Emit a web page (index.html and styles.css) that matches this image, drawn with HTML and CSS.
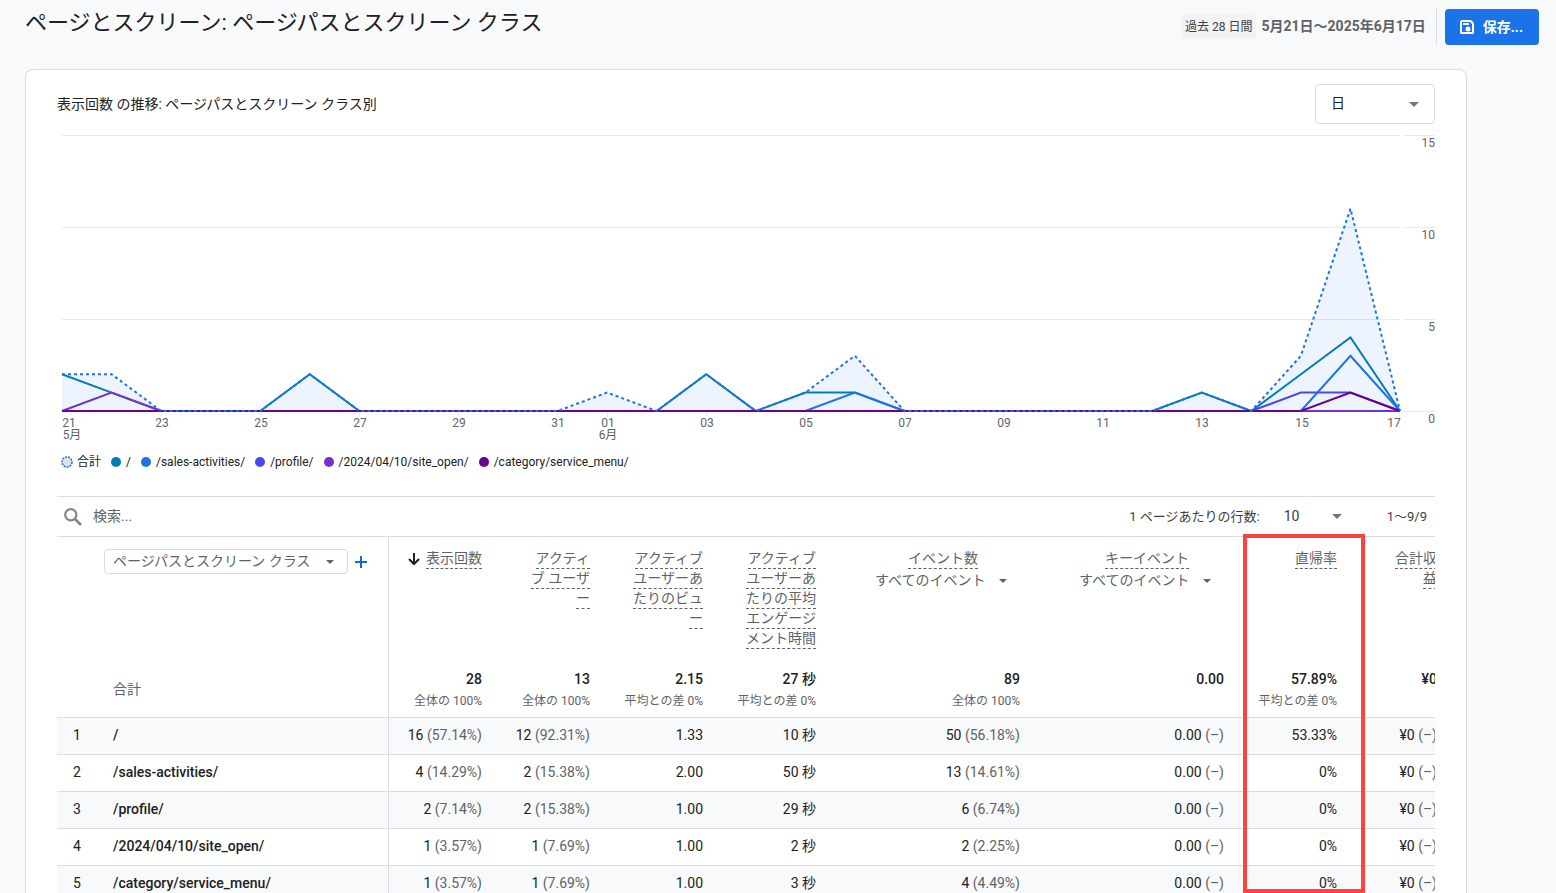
FILE: index.html
```html
<!DOCTYPE html>
<html lang="ja">

<head>
    <meta charset="utf-8">
    <meta name="viewport" content="width=device-width, initial-scale=1">
    <title>ページとスクリーン</title>
    <link rel="stylesheet" href="styles.css">
</head>

<body>
    <div class="page">

        <!-- ヘッダー -->
        <header class="header">
            <h1 class="header-title">ページとスクリーン: ページパスとスクリーン クラス</h1>
            <div class="header-tools">
                <span class="period">過去 28 日間</span>
                <span class="dates">5月21日～2025年6月17日</span>
                <button class="save-button" type="button">
                    <svg width="16" height="16" viewBox="0 0 16 16" aria-hidden="true">
                        <path fill="#fff" fill-rule="evenodd" d="M2.500 1H12l3 3v9.500a1.500 1.500 0 0 1-1.500 1.500h-11A1.500 1.500 0 0 1 1 13.500v-11A1.500 1.500 0 0 1 2.500 1zM3 3v10h10V5l-2-2z" />
                        <path fill="#fff" d="M4 4h6v2H4z" />
                        <circle cx="9" cy="10" r="2.500" fill="#fff" />
                    </svg>
                    保存...
                </button>
            </div>
        </header>

        <main class="card">

            <!-- グラフ -->
            <div class="chart-head">
                <h2 class="chart-title">表示回数 の推移: ページパスとスクリーン クラス別</h2>
                <div class="select-box unit-select">
                    <select aria-label="期間の単位">
                        <option>日</option>
                    </select>
                    <span class="caret"></span>
                </div>
            </div>

            <svg class="chart" viewBox="0 0 1378 314" role="img" aria-label="表示回数の推移">
                <path class="grid-line" d="M5 7.500H1343M1347 7.500H1378M5 99.500H1343M1347 99.500H1378M5 191.500H1343M1347 191.500H1378M5 283.500H1343M1347 283.500H1378" />
                <path class="grid-line" d="M104.500 284v5M203.500 284v5M302.500 284v5M401.500 284v5M500.500 284v5M550.500 284v5M649.500 284v5M748.500 284v5M847.500 284v5M946.500 284v5M1046.500 284v5M1145.500 284v5M1244.500 284v5M1342.500 284v5" />
                <!-- x: 5月21日からの日数, y: 表示回数 -->
                <g transform="translate(5 283) scale(49.556 -18.4)">
                    <polygon class="area" points="0,0 0,2 1,2 2,0 4,0 5,2 6,0 10,0 11,1 12,0 13,2 14,0 15,1 16,3 17,0 22,0 23,1 24,0 25,3 26,11 27,0" />
                    <polyline class="line line-home" points="0,2 1,1 2,0 4,0 5,2 6,0 12,0 13,2 14,0 15,1 16,1 17,0 22,0 23,1 24,0 25,2 26,4 27,0" />
                    <polyline class="line line-sales" points="0,0 15,0 16,1 17,0 25,0 26,3 27,0" />
                    <polyline class="line line-profile" points="0,0 24,0 25,1 26,1 27,0" />
                    <polyline class="line line-open" points="0,0 1,1 2,0 27,0" />
                    <polyline class="line line-menu" points="0,0 25,0 26,1 27,0" />
                    <polyline class="line line-total" points="0,2 1,2 2,0 4,0 5,2 6,0 10,0 11,1 12,0 13,2 14,0 15,1 16,3 17,0 22,0 23,1 24,0 25,3 26,11 27,0" />
                </g>
                <g class="axis axis-y">
                    <text x="1378" y="19">15</text>
                    <text x="1378" y="111">10</text>
                    <text x="1378" y="203">5</text>
                    <text x="1378" y="295">0</text>
                </g>
                <g class="axis axis-x">
                    <text x="12" y="299">21</text>
                    <text x="15" y="311">5月</text>
                    <text x="105" y="299">23</text>
                    <text x="204" y="299">25</text>
                    <text x="303" y="299">27</text>
                    <text x="402" y="299">29</text>
                    <text x="501" y="299">31</text>
                    <text x="551" y="299">01</text>
                    <text x="551" y="311">6月</text>
                    <text x="650" y="299">03</text>
                    <text x="749" y="299">05</text>
                    <text x="848" y="299">07</text>
                    <text x="947" y="299">09</text>
                    <text x="1046" y="299">11</text>
                    <text x="1145" y="299">13</text>
                    <text x="1245" y="299">15</text>
                    <text x="1337" y="299">17</text>
                </g>
            </svg>

            <ul class="legend">
                <li><svg class="dot" viewBox="0 0 12 12"><circle class="dot-total-fill" cx="6" cy="6" r="5" /><circle class="dot-total" cx="6" cy="6" r="5" /></svg>合計</li>
                <li><svg class="dot" viewBox="0 0 12 12"><circle fill="#047cb4" cx="6" cy="6" r="5" /></svg>/</li>
                <li><svg class="dot" viewBox="0 0 12 12"><circle fill="#1a73e8" cx="6" cy="6" r="5" /></svg>/sales-activities/</li>
                <li><svg class="dot" viewBox="0 0 12 12"><circle fill="#4a48e8" cx="6" cy="6" r="5" /></svg>/profile/</li>
                <li><svg class="dot" viewBox="0 0 12 12"><circle fill="#7431cf" cx="6" cy="6" r="5" /></svg>/2024/04/10/site_open/</li>
                <li><svg class="dot" viewBox="0 0 12 12"><circle fill="#6c0090" cx="6" cy="6" r="5" /></svg>/category/service_menu/</li>
            </ul>

            <!-- 検索と行数 -->
            <div class="toolbar">
                <svg width="18" height="18" viewBox="0 0 18 18" aria-hidden="true">
                    <circle cx="6.800" cy="6.800" r="5.600" fill="none" stroke="#80868b" stroke-width="2.200" />
                    <path d="M11 11l6 6" stroke="#80868b" stroke-width="2.600" />
                </svg>
                <input class="search" type="text" placeholder="検索..." aria-label="検索">
                <label class="rows-label" for="rows">1 ページあたりの行数:</label>
                <div class="rows-select">
                    <select id="rows">
                        <option>10</option>
                    </select>
                    <span class="caret"></span>
                </div>
                <span class="range">1～9/9</span>
            </div>

            <!-- 表 -->
            <section class="report">
                <div class="table-wrap">
                    <table>
                        <colgroup>
                            <col class="col-no">
                            <col class="col-name">
                            <col class="col-views">
                            <col class="col-users">
                            <col class="col-metric">
                            <col class="col-metric">
                            <col class="col-event">
                            <col class="col-event">
                            <col class="col-metric">
                            <col class="col-sales">
                        </colgroup>
                        <thead>
                            <tr>
                                <th></th>
                                <th class="name">
                                    <div class="dimension">
                                        <div class="select-box dimension-select">
                                            <select aria-label="ディメンション">
                                                <option>ページパスとスクリーン クラス</option>
                                            </select>
                                            <span class="caret small"></span>
                                        </div>
                                        <button class="add-button" type="button" aria-label="追加">
                                            <svg width="12" height="12" viewBox="0 0 12 12"><path d="M6 0v12M0 6h12" stroke="#1967d2" stroke-width="2" /></svg>
                                        </button>
                                    </div>
                                </th>
                                <th>
                                    <svg class="sort-arrow" width="12" height="14" viewBox="0 0 12 14" aria-hidden="true"><path d="M6 1v11M1 7l5 5 5-5" fill="none" stroke="#202124" stroke-width="2" /></svg>
                                    <span class="term">表示回数</span>
                                </th>
                                <th><span class="term">アクティ<br>ブ ユーザ<br>ー</span></th>
                                <th><span class="term">アクティブ<br>ユーザーあ<br>たりのビュ<br>ー</span></th>
                                <th><span class="term">アクティブ<br>ユーザーあ<br>たりの平均<br>エンゲージ<br>メント時間</span></th>
                                <th>
                                    <div class="event">
                                        <span class="term">イベント数</span>
                                        <div class="event-select">
                                            <select aria-label="イベント数の対象">
                                                <option>すべてのイベント</option>
                                            </select>
                                            <span class="caret small"></span>
                                        </div>
                                    </div>
                                </th>
                                <th>
                                    <div class="event">
                                        <span class="term">キーイベント</span>
                                        <div class="event-select">
                                            <select aria-label="キーイベントの対象">
                                                <option>すべてのイベント</option>
                                            </select>
                                            <span class="caret small"></span>
                                        </div>
                                    </div>
                                </th>
                                <th><span class="term">直帰率</span></th>
                                <th><span class="term">合計収<br>益</span></th>
                            </tr>
                            <tr class="total">
                                <td></td>
                                <td class="name">合計</td>
                                <td><strong>28</strong><small>全体の 100%</small></td>
                                <td><strong>13</strong><small>全体の 100%</small></td>
                                <td><strong>2.15</strong><small>平均との差 0%</small></td>
                                <td><strong>27 秒</strong><small>平均との差 0%</small></td>
                                <td><strong>89</strong><small>全体の 100%</small></td>
                                <td><strong>0.00</strong></td>
                                <td><strong>57.89%</strong><small>平均との差 0%</small></td>
                                <td><strong>¥0</strong></td>
                            </tr>
                        </thead>
                        <tbody>
                            <tr>
                                <td>1</td>
                                <td class="name">/</td>
                                <td>16 <i>(57.14%)</i></td>
                                <td>12 <i>(92.31%)</i></td>
                                <td>1.33</td>
                                <td>10 秒</td>
                                <td>50 <i>(56.18%)</i></td>
                                <td>0.00 <i>(–)</i></td>
                                <td>53.33%</td>
                                <td>¥0 <i>(–)</i></td>
                            </tr>
                            <tr>
                                <td>2</td>
                                <td class="name">/sales-activities/</td>
                                <td>4 <i>(14.29%)</i></td>
                                <td>2 <i>(15.38%)</i></td>
                                <td>2.00</td>
                                <td>50 秒</td>
                                <td>13 <i>(14.61%)</i></td>
                                <td>0.00 <i>(–)</i></td>
                                <td>0%</td>
                                <td>¥0 <i>(–)</i></td>
                            </tr>
                            <tr>
                                <td>3</td>
                                <td class="name">/profile/</td>
                                <td>2 <i>(7.14%)</i></td>
                                <td>2 <i>(15.38%)</i></td>
                                <td>1.00</td>
                                <td>29 秒</td>
                                <td>6 <i>(6.74%)</i></td>
                                <td>0.00 <i>(–)</i></td>
                                <td>0%</td>
                                <td>¥0 <i>(–)</i></td>
                            </tr>
                            <tr>
                                <td>4</td>
                                <td class="name">/2024/04/10/site_open/</td>
                                <td>1 <i>(3.57%)</i></td>
                                <td>1 <i>(7.69%)</i></td>
                                <td>1.00</td>
                                <td>2 秒</td>
                                <td>2 <i>(2.25%)</i></td>
                                <td>0.00 <i>(–)</i></td>
                                <td>0%</td>
                                <td>¥0 <i>(–)</i></td>
                            </tr>
                            <tr>
                                <td>5</td>
                                <td class="name">/category/service_menu/</td>
                                <td>1 <i>(3.57%)</i></td>
                                <td>1 <i>(7.69%)</i></td>
                                <td>1.00</td>
                                <td>3 秒</td>
                                <td>4 <i>(4.49%)</i></td>
                                <td>0.00 <i>(–)</i></td>
                                <td>0%</td>
                                <td>¥0 <i>(–)</i></td>
                            </tr>
                        </tbody>
                    </table>
                </div>
                <!-- 直帰率を囲む赤枠 -->
                <div class="highlight"></div>
            </section>
        </main>
    </div>
</body>

</html>
```
FILE: styles.css
```css
* {
    box-sizing: border-box;
}

body {
    margin: 0;
    background: #f8f9fb;
    color: #202124;
    font-family: Roboto, "Noto Sans CJK JP", sans-serif;
    font-size: 14px;
    line-height: 20px;
}

select,
input,
button {
    font: inherit;
    color: inherit;
    border: none;
    background: none;
    padding: 0;
    margin: 0;
    outline: none;
}

select {
    appearance: none;
    width: 100%;
    padding-bottom: 2px;
    cursor: pointer;
}

.page {
    display: flex;
    flex-direction: column;
    height: 100vh;
    overflow: hidden;
}

/* ヘッダー */
.header {
    display: flex;
    justify-content: space-between;
    align-items: flex-start;
    padding: 9px 17px 24px 25px;
}

.header-title {
    margin: 0;
    font-size: 22px;
    font-weight: 400;
    line-height: 28px;
}

.header-tools {
    display: flex;
    align-items: center;
    height: 36px;
}

.period {
    padding: 2px 4px;
    margin-right: 5px;
    background: #f1f3f4;
    color: #3c4043;
    font-size: 12px;
    border-radius: 2px;
}

.dates {
    line-height: 34px;
    padding: 0 10px 2px 0;
    margin-right: 8px;
    border-right: 1px solid #dadce0;
    color: #5f6368;
    font-weight: 700;
}

.save-button {
    display: flex;
    align-items: center;
    gap: 8px;
    height: 36px;
    padding: 0 16px 0 14px;
    border-radius: 4px;
    background: #1a73e8;
    color: #fff;
    font-weight: 700;
    cursor: pointer;
}

/* カード */
.card {
    flex: 1;
    min-height: 0;
    display: flex;
    flex-direction: column;
    margin: 0 89px 0 25px;
    padding: 14px 31px 0;
    background: #fff;
    border: 1px solid #dadce0;
    border-bottom: none;
    border-radius: 8px 8px 0 0;
}

.chart-head {
    display: flex;
    justify-content: space-between;
    align-items: center;
}

.chart-title {
    margin: 0;
    font-size: 14px;
    font-weight: 400;
}

.select-box {
    display: flex;
    align-items: center;
    border: 1px solid #dadce0;
    border-radius: 4px;
}

.unit-select {
    width: 120px;
    height: 40px;
    padding: 0 15px;
}

.caret {
    flex: none;
    border: 5px solid transparent;
    border-top-color: #757575;
    border-bottom: none;
}

.caret.small {
    border-width: 4px;
    border-top-color: #5f6368;
    border-bottom: none;
}

/* グラフ */
.chart {
    flex: none;
    display: block;
    width: 100%;
    margin-top: 4px;
}

.grid-line {
    fill: none;
    stroke: #e8eaed;
}

.area {
    fill: #1a73e8;
    fill-opacity: 0.08;
}

.line {
    fill: none;
    stroke-width: 2px;
    vector-effect: non-scaling-stroke;
}

.line-home { stroke: #047cb4; }
.line-sales { stroke: #1a73e8; }
.line-profile { stroke: #4a48e8; }
.line-open { stroke: #7431cf; }
.line-menu { stroke: #6c0090; }

.line-total {
    stroke: #1a73e8;
    stroke-dasharray: 3 3;
}

.axis {
    font-size: 12px;
    fill: #5f6368;
}

.axis-x {
    text-anchor: middle;
}

.axis-y {
    text-anchor: end;
}

.legend {
    display: flex;
    gap: 9px;
    margin: 10px 0 24px 4px;
    padding: 0;
    list-style: none;
    font-size: 12px;
}

.legend li {
    display: flex;
    align-items: center;
    gap: 4px;
}

.dot {
    width: 12px;
    height: 12px;
}

.dot-total-fill {
    fill: #e0e2e6;
}

.dot-total {
    fill: none;
    stroke: #1a73e8;
    stroke-width: 1.5px;
    stroke-dasharray: 2 1;
}

/* 検索と行数 */
.toolbar {
    flex: none;
    display: flex;
    align-items: center;
    height: 41px;
    padding: 0 8px 0 7px;
    border-top: 1px solid #dadce0;
    border-bottom: 1px solid #dadce0;
    color: #3c4043;
    font-size: 13px;
}

.search {
    flex: 1;
    margin-left: 11px;
    padding-bottom: 2px;
    font-size: 14px;
}

.search::placeholder {
    color: #5f6368;
}

.rows-select {
    display: flex;
    align-items: center;
    width: 58px;
    margin: 0 45px 0 24px;
    font-size: 14px;
}

/* 表 */
.report {
    position: relative;
    flex: 1;
    min-height: 0;
}

.table-wrap {
    height: 100%;
    overflow: hidden;
}

table {
    width: 1396px;
    table-layout: fixed;
    border-collapse: separate;
    border-spacing: 0;
}

.col-no { width: 40px; }
.col-name { width: 292px; }
.col-views { width: 109px; }
.col-users { width: 108px; }
.col-metric { width: 113px; }
.col-event { width: 204px; }
.col-sales { width: 100px; }

th,
td {
    padding: 0 16px;
    font-weight: 400;
    text-align: right;
    white-space: nowrap;
}

th {
    height: 123px;
    padding-top: 11px;
    vertical-align: top;
    color: #5f6368;
}

td {
    height: 37px;
    padding-bottom: 2px;
    border-bottom: 1px solid #dadce0;
}

td:first-child {
    padding: 0 0 2px;
    text-align: center;
}

.name {
    text-align: left;
    border-right: 1px solid #dadce0;
}

th.name {
    padding-left: 7px;
}

tbody .name {
    font-weight: 500;
}

.total td {
    height: 58px;
    padding-top: 9px;
    padding-bottom: 8px;
    vertical-align: top;
}

.total td.name {
    padding: 0 16px;
    vertical-align: middle;
    color: #5f6368;
}

.total strong,
.total small {
    display: block;
    font-weight: 500;
}

.total small {
    margin-top: 4px;
    font-size: 12px;
    font-weight: 400;
    line-height: 16px;
    color: #5f6368;
}

tbody tr:nth-child(odd) {
    background: #f8f9fb;
}

td i {
    font-style: normal;
    color: #5f6368;
}

.term {
    padding-bottom: 2px;
    border-bottom: 1px dashed #5f6368;
}

.sort-arrow {
    margin-right: 3px;
    vertical-align: middle;
}

.dimension {
    display: flex;
    align-items: center;
    gap: 7px;
    padding-top: 1px;
}

.dimension-select {
    width: 244px;
    height: 25px;
    padding: 0 13px 0 8px;
}

.add-button {
    display: flex;
    cursor: pointer;
}

.event {
    width: 154px;
    margin-left: auto;
    text-align: center;
}

.event-select {
    display: flex;
    align-items: center;
    width: 136px;
    margin: 2px auto 0;
    padding-right: 4px;
}

.highlight {
    position: absolute;
    top: -3px;
    bottom: 0;
    right: 70px;
    width: 122px;
    border: 4px solid #ff4141;
}
```
